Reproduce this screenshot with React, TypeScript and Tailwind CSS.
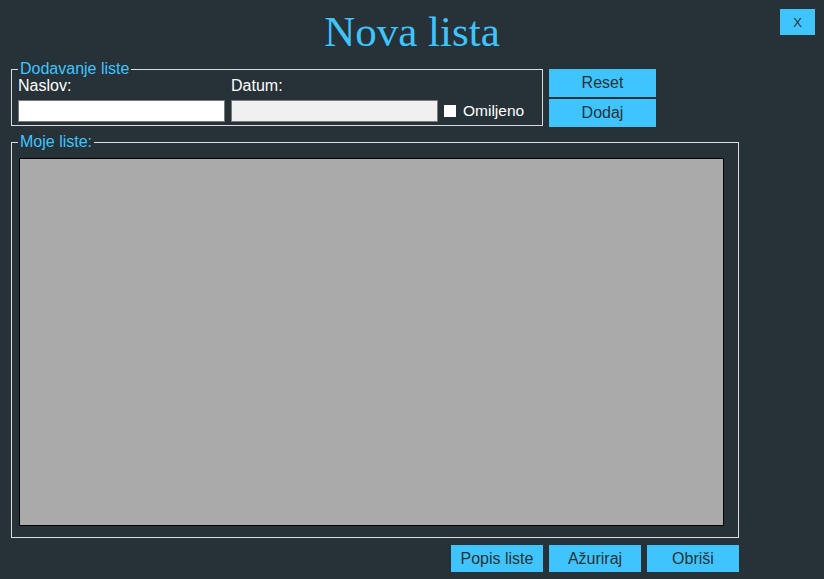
export default function App() {
    return (
        <div className="relative w-[824px] h-[579px] bg-[#263238] overflow-hidden font-['Liberation_Sans',Arial,sans-serif]">
            <div className="h-[61px] flex items-center justify-center">
                <h1 className="text-[#40C4FF] text-[43px] leading-none font-['Liberation_Serif','Times_New_Roman',serif] pt-[2px]">Nova lista</h1>
            </div>

            <button className="absolute top-[9px] left-[780px] w-[35px] h-[26px] bg-[#40C4FF] text-[#263238] text-[13px] leading-none">X</button>

            <div className="flex items-start ml-[11px]">
                <fieldset className="w-[532px] h-[65px] border border-[#dcdcdc] pl-[6px] pr-[6px]">
                    <legend className="px-[2px] text-[16px] leading-[16px] text-[#40C4FF]">Dodavanje liste</legend>
                    <div className="flex items-end gap-[6px]">
                        <div className="flex flex-col w-[207px]">
                            <span className="text-white text-[16px] leading-[18px]">Naslov:</span>
                            <input className="mt-[5px] h-[22px] bg-white border border-[#7a7a7a] outline-none" />
                        </div>
                        <div className="flex flex-col w-[207px]">
                            <span className="text-white text-[16px] leading-[18px]">Datum:</span>
                            <input className="mt-[5px] h-[22px] bg-[#f0f0f0] border border-[#7a7a7a] outline-none" />
                        </div>
                        <label className="flex items-center h-[22px]">
                            <span className="w-[12px] h-[12px] bg-white"></span>
                            <span className="ml-[7px] text-white text-[15.5px] leading-none">Omiljeno</span>
                        </label>
                    </div>
                </fieldset>

                <div className="flex flex-col gap-[2px] ml-[6px] mt-[8px]">
                    <button className="w-[107px] h-[28px] bg-[#40C4FF] text-[#263238] text-[16px]">Reset</button>
                    <button className="w-[107px] h-[28px] bg-[#40C4FF] text-[#263238] text-[16px]">Dodaj</button>
                </div>
            </div>

            <fieldset className="ml-[11px] mt-[7px] w-[728px] border border-[#dcdcdc] pl-[6px] pr-[14px] pb-[11px]">
                <legend className="px-[2px] text-[16px] leading-[16px] text-[#40C4FF]">Moje liste:</legend>
                <div className="mt-[8px] ml-[1px] h-[368px] bg-[#aaaaaa] border border-black"></div>
            </fieldset>

            <div className="flex justify-end gap-[6px] w-[739px] mt-[7px]">
                <button className="w-[92px] h-[27px] bg-[#40C4FF] text-[#263238] text-[16px]">Popis liste</button>
                <button className="w-[92px] h-[27px] bg-[#40C4FF] text-[#263238] text-[16px]">Ažuriraj</button>
                <button className="w-[92px] h-[27px] bg-[#40C4FF] text-[#263238] text-[16px]">Obriši</button>
            </div>
        </div>
    )
}
